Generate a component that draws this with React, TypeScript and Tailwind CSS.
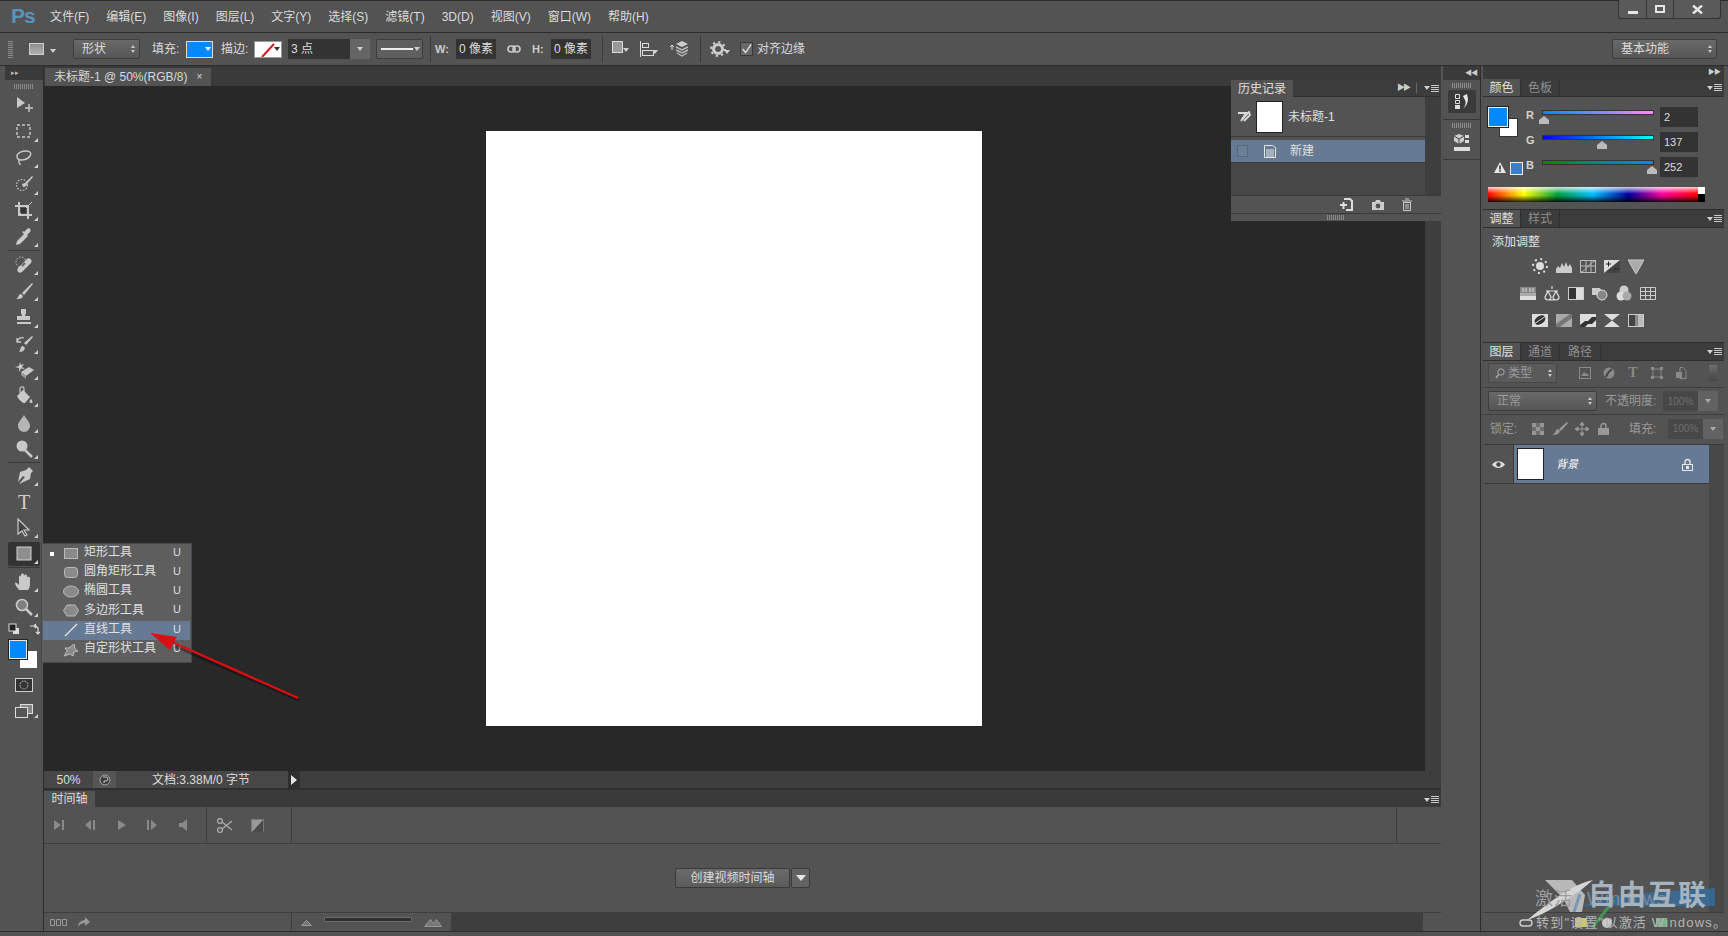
import React from "react";

const MENUS = ["文件(F)", "编辑(E)", "图像(I)", "图层(L)", "文字(Y)", "选择(S)", "滤镜(T)", "3D(D)", "视图(V)", "窗口(W)", "帮助(H)"];

function Svg({ w = 16, h = 16, className, children }: { w?: number; h?: number; className?: string; children: React.ReactNode }) {
  return (
    <svg width={w} height={h} viewBox={`0 0 ${w} ${h}`} className={className} fill="none">
      {children}
    </svg>
  );
}

const C = "#c9c9c9";

const toolIcons: Record<string, React.ReactNode> = {
  move: (<><path d="M3 2v11l8-5z" fill={C} /><path d="M15 9v8M11 13h8" stroke={C} strokeWidth="1.4" /></>),
  marquee: <rect x="3" y="3" width="13" height="12" stroke={C} strokeWidth="1.4" strokeDasharray="3 2" />,
  lasso: <path d="M3 8c0-3 5-5 9-5s6 2 4 5-6 4-9 4-4-2-4-4zM5 12c-1 2 1 3 1 5" stroke={C} strokeWidth="1.4" />,
  quick: (<><circle cx="8" cy="11" r="5.5" stroke={C} strokeWidth="1.2" strokeDasharray="1.5 1.5" /><path d="M18 2l-7 7-3 1 1 3c3 0 4-2 4-3l6-7z" fill={C} /></>),
  crop: (<><path d="M5 1v13h13M1 5h13v13" stroke={C} strokeWidth="2" /><path d="M5 14L18 1" stroke={C} /><rect x="7" y="7" width="5" height="5" fill="#333" /></>),
  eyedrop: <path d="M2 18l1-4 7-7 3 3-7 7zM10 5l3-3c2-2 5 1 3 3l-3 3 1 1-1 1-5-5 1-1z" fill={C} />,
  heal: (<><path d="M4 13L13 4c2-2 6 1 4 4l-9 9c-3 2-6-1-4-4z" fill={C} /><circle cx="7" cy="7" r="5" stroke={C} strokeDasharray="1.5 1.5" /><path d="M8 11l3-3" stroke="#666" strokeWidth="2" /></>),
  brush: <path d="M18 2L8 12l2 2L19 3zM2 18c3 0 6 0 7-3l-2-2c-3 0-2 4-5 5z" fill={C} />,
  stamp: <path d="M7 2h5v4l-1 3h5v4H3V9h5l-1-3zM3 15h14v2H3z" fill={C} />,
  history: (<><path d="M18 2L10 9l2 2 7-8zM5 18c3 0 5-1 6-4l-2-2c-3 0-2 4-4 6z" fill={C} /><path d="M3 8c1-4 4-5 7-4M3 4v4h4" stroke={C} strokeWidth="1.3" /></>),
  eraser: (<><path d="M7 12l8-5 5 3-8 6z" fill={C} /><path d="M7 12v3l5 4v-3z" fill="#999" /><path d="M6 2l1 3 3-1-2 3 3 2-4-.5L5 12 5 8 1 7l4-1z" fill={C} /></>),
  bucket: (<><path d="M3 10l6-6 7 7-5 6c-2 1-7-4-8-7z" fill={C} /><path d="M6 7V3c0-3 4-3 4 0v3" stroke={C} strokeWidth="1.2" /><path d="M17 13c2 2 2 4 0 4s-2-2 0-4z" fill={C} /></>),
  drop: <path d="M10 2c3 5 6 7 6 11a6 6 0 01-12 0c0-4 3-6 6-11z" fill="#b5b5b5" />,
  dodge: (<><circle cx="8" cy="7" r="5.5" fill={C} /><path d="M11 11l7 7" stroke={C} strokeWidth="2.5" /></>),
  pen: <path d="M15 1l4 4-2 2-1 6-11 5 6-7 .6.5L9 10 4 16l2-10 6-2zM4 18h0" fill={C} />,
  path: <path d="M4 1v15l4-3 3 5 2-1-3-5h5z" fill="#444" stroke={C} strokeWidth="1.2" />,
  rect: (<><rect x="3" y="3" width="14" height="13" fill="#8f8f8f" stroke="#d2d2d2" /></>),
  hand: <path d="M5 18c-2-3-4-5-4-7 1-1 2 0 4 2V5c0-2 2-2 2 0V3c0-2 3-2 3 0v1c0-2 3-2 3 0v2c0-2 3-1 3 0v6c0 3-1 5-2 6z" fill={C} />,
  zoom: (<><circle cx="8" cy="7" r="5.5" fill="#7f7f7f" stroke={C} strokeWidth="1.6" /><path d="M12 11l6 6" stroke={C} strokeWidth="2.5" /></>),
};

function Tool({ id, h = 26.4, corner = true }: { id: string; h?: number; corner?: boolean }) {
  return (
    <div className="relative flex items-center justify-center" style={{ height: h }}>
      <Svg w={20} h={20}>{toolIcons[id]}</Svg>
      {corner && <span className="absolute right-[5px] bottom-[3px] border-b-[4px] border-l-[4px] border-b-[#cfcfcf] border-l-transparent" />}
    </div>
  );
}

function Toolbox() {
  return (
    <div className="w-[39px] ml-[5px] mr-0 flex flex-col bg-[#535353] border-r border-[#2c2c2c]">
      <div className="h-[14px] bg-[#3a3a3a] flex items-center pl-[6px] text-[7px] text-[#bbb]">▸▸</div>
      <div className="h-[12px] flex items-center justify-center"><Grip w={20} /></div>
      <div className="flex flex-col">
        {["move", "marquee", "lasso", "quick", "crop", "eyedrop"].map((t, i) => <Tool key={t} id={t} corner={i > 0} />)}
      </div>
      <div className="mx-[3px] border-b border-[#3a3a3a]" />
      <div className="flex flex-col">
        {["heal", "brush", "stamp", "history", "eraser", "bucket", "drop", "dodge"].map((t) => <Tool key={t} id={t} />)}
      </div>
      <div className="mx-[3px] border-b border-[#3a3a3a]" />
      <Tool id="pen" h={26} />
      <div className="relative h-[26px] flex items-center justify-center font-['Liberation_Serif',serif] text-[20px] text-[#cfcfcf]">T</div>
      <Tool id="path" h={26} />
      <div className="h-[1px]" />
      <div className="relative mx-[3px] h-[24px] bg-[#333] rounded-[2px] flex items-center justify-center">
        <Svg w={20} h={20}>{toolIcons.rect}</Svg>
        <span className="absolute right-[2px] bottom-[2px] border-b-[4px] border-l-[4px] border-b-[#d8d8d8] border-l-transparent" />
      </div>
      <div className="mx-[3px] mt-[1px] border-b border-[#3a3a3a]" />
      <Tool id="hand" h={27} />
      <Tool id="zoom" h={25} />
      <div className="h-[14px] mt-[2px] flex items-center justify-between px-[3px]">
        <Svg w={12} h={12}><rect x="5" y="5" width="6" height="6" fill="#ddd" /><rect x="1" y="1" width="7" height="7" fill="#222" stroke="#ddd" /></Svg>
        <Svg w={11} h={12}><path d="M1 3h6l2 2v5M7 1l-2 2 2 2M7 9l2 2 2-2" stroke="#ddd" strokeWidth="1.2" /></Svg>
      </div>
      <div className="relative h-[30px] mt-[4px]">
        <div className="absolute left-[14px] top-[10px] w-[19px] h-[19px] bg-white border border-[#555]" />
        <div className="absolute left-[4px] top-0 w-[18px] h-[19px] bg-[#0289fc] border border-[#e8e8e8] outline outline-[#222]" />
      </div>
      <div className="h-[15px] mt-[8px]" />
      <div className="flex justify-center -mt-[15px]">
        <Svg w={18} h={14}><rect x=".5" y=".5" width="17" height="13" fill="#333" stroke="#d0d0d0" /><circle cx="9" cy="7" r="4" stroke="#ddd" strokeDasharray="1.5 1.2" /></Svg>
      </div>
      <div className="relative flex justify-center mt-[12px]">
        <Svg w={18} h={14}><rect x="5.5" y=".5" width="12" height="9" fill="#888" stroke="#ddd" /><rect x=".5" y="3.5" width="12" height="10" fill="#555" stroke="#ddd" /></Svg>
        <span className="absolute right-[5px] bottom-0 border-b-[4px] border-l-[4px] border-b-[#cfcfcf] border-l-transparent" />
      </div>
    </div>
  );
}

function Grip({ w = 20 }: { w?: number }) {
  return <div className="h-[5px] bg-[repeating-linear-gradient(90deg,#8a8a8a_0_1px,transparent_1px_2px)]" style={{ width: w }} />;
}

function Chevrons({ className = "" }: { className?: string }) {
  return (
    <span className={`flex flex-col gap-[2px] items-end ${className}`}>
      <span className="border-x-[2px] border-b-[3px] border-x-transparent border-b-[#c8c8c8]" />
      <span className="border-x-[2px] border-t-[3px] border-x-transparent border-t-[#c8c8c8]" />
    </span>
  );
}

function Caret({ color = "#d0d0d0" }: { color?: string }) {
  return <span className="inline-block border-x-[3px] border-t-[4px] border-x-transparent" style={{ borderTopColor: color }} />;
}

function PanelMenu() {
  return (
    <span className="flex items-center gap-[1px]">
      <Caret />
      <span className="flex flex-col gap-[1px] w-[8px]">
        <i className="block h-px bg-[#c8c8c8]" /><i className="block h-px bg-[#c8c8c8]" /><i className="block h-px bg-[#c8c8c8]" /><i className="block h-px bg-[#c8c8c8]" />
      </span>
    </span>
  );
}

function Select({ label, className = "" }: { label: string; className?: string }) {
  return (
    <div className={`flex items-center justify-between rounded-[2px] border border-[#3d3d3d] bg-gradient-to-b from-[#696969] to-[#565656] pl-[8px] pr-[4px] h-[20px] ${className}`}>
      <span>{label}</span>
      <Chevrons />
    </div>
  );
}

function Field({ children, className = "" }: { children: React.ReactNode; className?: string }) {
  return <div className={`h-[20px] bg-[#333] flex items-center justify-center text-[#ddd] ${className}`}>{children}</div>;
}

function Sep() {
  return <div className="w-px h-[26px] bg-[#3a3a3a]" />;
}

function TitleBar() {
  return (
    <div className="h-[33px] flex border-t border-[#2c2c2c] border-b border-b-[#2c2c2c] relative">
      <div className="w-[50px] pl-[11px] pt-[3px] text-[21px] leading-[24px] font-bold text-[#5a93ba] font-['Liberation_Sans',sans-serif] tracking-[-1px]">Ps</div>
      <div className="flex gap-[17px] items-center pt-[1px] text-[12px] text-[#dcdcdc]">
        {MENUS.map((m) => <span key={m} className="whitespace-nowrap">{m}</span>)}
      </div>
      <div className="ml-auto mr-[7px] flex h-[19px] w-[103px] -mt-px rounded-b-[3px] border border-t-0 border-[#333] bg-[#5a5a5a]">
        <div className="w-[28px] flex items-end justify-center pb-[4px] border-r border-[#3a3a3a]"><i className="block w-[10px] h-[3px] bg-[#e6e6e6]" /></div>
        <div className="w-[27px] flex items-center justify-center border-r border-[#3a3a3a]"><i className="block w-[10px] h-[8px] border-2 border-[#e6e6e6]" /></div>
        <div className="flex-1 flex items-center justify-center text-[#e6e6e6]">
          <Svg w={11} h={9}><path d="M1 .5l9 8M10 .5l-9 8" stroke="#e6e6e6" strokeWidth="2.4" /></Svg>
        </div>
      </div>
    </div>
  );
}

function OptionsBar() {
  return (
    <div className="h-[33px] flex items-center border-b border-[#2c2c2c] text-[12px] text-[#dcdcdc] relative">
      <div className="ml-[8px] w-[5px] h-[18px] bg-[repeating-linear-gradient(0deg,#8a8a8a_0_1px,transparent_1px_2px)]" />
      <div className="ml-[16px] w-[15px] h-[12px] bg-gradient-to-b from-[#8e8e8e] to-[#b0b0b0] border border-[#d0d0d0]" />
      <span className="ml-[6px]"><Caret /></span>
      <Select label="形状" className="ml-[17px] w-[67px]" />
      <span className="ml-[12px] w-[34px]">填充:</span>
      <div className="relative w-[27px] h-[17px] bg-[#0289fc] border border-[#dcdcdc]">
        <span className="absolute right-[1px] bottom-[1px]"><Caret color="#fff" /></span>
      </div>
      <span className="ml-[8px] w-[33px]">描边:</span>
      <div className="relative w-[28px] h-[17px] bg-white border border-[#999] overflow-hidden">
        <svg width="28" height="17" className="absolute inset-0"><path d="M7 15L19 2" stroke="#d01820" strokeWidth="2" /></svg>
        <span className="absolute right-[1px] bottom-[1px]"><Caret color="#333" /></span>
      </div>
      <div className="ml-[6px] flex">
        <Field className="w-[62px] !justify-start pl-[3px]">3 点</Field>
        <div className="w-[20px] h-[20px] flex items-center justify-center bg-[#656565]"><Caret /></div>
      </div>
      <div className="ml-[6px] w-[47px] h-[20px] rounded-[2px] border border-[#3d3d3d] bg-[#5f5f5f] flex items-center gap-[1px] pl-[4px]">
        <i className="block w-[32px] h-[2px] bg-[#eee]" /><Caret />
      </div>
      <div className="ml-[7px]"><Sep /></div>
      <span className="ml-[4px] w-[21px] font-bold text-[11px] text-[#ccc]">W:</span>
      <Field className="w-[40px]">0 像素</Field>
      <span className="ml-[11px]">
        <Svg w={14} h={10}><rect x="1" y="2" width="7" height="6" rx="3" stroke="#ccc" strokeWidth="1.6" /><rect x="6" y="2" width="7" height="6" rx="3" stroke="#ccc" strokeWidth="1.6" /></Svg>
      </span>
      <span className="ml-[11px] w-[19px] font-bold text-[11px] text-[#ccc]">H:</span>
      <Field className="w-[40px]">0 像素</Field>
      <div className="ml-[11px]"><Sep /></div>
      <span className="relative ml-[9px] w-[14px] h-[16px]">
        <Svg w={12} h={15}><rect x=".5" y=".5" width="10" height="11" fill="#999" stroke="#ddd" /></Svg>
        <span className="absolute right-[-3px] bottom-0"><Caret /></span>
      </span>
      <span className="relative ml-[14px] w-[14px] h-[16px]">
        <Svg w={14} h={16}><path d="M.5 0v16" stroke="#ddd" /><rect x="2.5" y="2.5" width="6" height="4" stroke="#ddd" /><rect x="2.5" y="9.5" width="11" height="5" stroke="#ddd" /></Svg>
        <span className="absolute right-[-4px] bottom-[-2px]"><Caret /></span>
      </span>
      <span className="ml-[16px] w-[20px] h-[18px]">
        <Svg w={20} h={18}><path d="M12 1l6 3-6 3-6-3z" fill="#ccc" /><path d="M6 7l6 3 6-3M6 10l6 3 6-3M7 13l5 3 5-3" stroke="#bbb" strokeWidth="1.4" /><path d="M2 10V5M0 7l2-2 2 2" stroke="#ddd" /></Svg>
      </span>
      <div className="ml-[10px]"><Sep /></div>
      <span className="relative ml-[9px] w-[16px] h-[16px]">
        <Svg w={16} h={16}><circle cx="8" cy="8" r="4.5" stroke="#ccc" strokeWidth="3" /><circle cx="8" cy="8" r="7" stroke="#ccc" strokeWidth="2" strokeDasharray="2.2 3.3" /></Svg>
        <span className="absolute right-[-4px] bottom-[-2px]"><Caret /></span>
      </span>
      <div className="ml-[14px] w-[13px] h-[14px] border border-[#3a3a3a] bg-[#686868] flex items-center justify-center">
        <Svg w={12} h={12}><path d="M2 6l3 4 6-9" stroke="#e0e0e0" strokeWidth="1.5" /></Svg>
      </div>
      <span className="ml-[4px] whitespace-nowrap">对齐边缘</span>
      <Select label="基本功能" className="absolute right-[11px] top-[6px] w-[105px] !pl-[8px]" />
    </div>
  );
}

const SHAPES = [
  { name: "矩形工具", icon: <rect x="1.5" y="1.5" width="13" height="10" fill="#8a8a8a" stroke="#bbb" />, on: true },
  { name: "圆角矩形工具", icon: <rect x="1.5" y="1.5" width="13" height="10" rx="3" fill="#8a8a8a" stroke="#bbb" /> },
  { name: "椭圆工具", icon: <ellipse cx="8" cy="6.5" rx="7.5" ry="5.5" fill="#8a8a8a" stroke="#bbb" /> },
  { name: "多边形工具", icon: <path d="M4 1h8l3.5 5.5L12 12H4L.5 6.5z" fill="#8a8a8a" stroke="#bbb" /> },
  { name: "直线工具", icon: <path d="M2 13L14 1" stroke="#e6e6e6" strokeWidth="1.2" />, active: true },
  { name: "自定形状工具", icon: <path d="M1 13l3-5-2-3 4 0 5-4 1 5 3 2-4 1-1 4-3-2z" fill="#8a8a8a" stroke="#bbb" /> },
];

function ShapeFlyout() {
  return (
    <div className="absolute left-[41px] top-[543px] w-[151px] h-[120px] bg-[#5e5e5e] border border-[#484848] px-[1px] text-[12px] text-[#e0e0e0]">
      {SHAPES.map((s) => (
        <div key={s.name} className={`flex items-center h-[19.2px] pl-[7px] ${s.active ? "bg-[#667a94]" : ""}`}>
          <i className={`block w-[4px] h-[4px] ${s.on ? "bg-white" : ""}`} />
          <span className="ml-[9px] w-[16px] flex"><Svg w={16} h={14}>{s.icon}</Svg></span>
          <span className="ml-[5px] w-[85px] pb-[3px] whitespace-nowrap">{s.name}</span>
          <span className="ml-[4px] pb-[3px] text-[11px] text-[#ddd]">U</span>
        </div>
      ))}
    </div>
  );
}

function RedArrow() {
  return (
    <svg className="absolute left-[140px] top-[620px] pointer-events-none" width="170" height="90" viewBox="0 0 170 90" fill="none">
      <path d="M158 78L34 24" stroke="#00000055" strokeWidth="3" transform="translate(1 2)" />
      <path d="M158 78L32 22" stroke="#d90f14" strokeWidth="2.4" />
      <path d="M10 13L37 17 33 23 30 30z" fill="#d90f14" />
    </svg>
  );
}

function HistoryPanel() {
  return (
    <div className="absolute right-0 top-[14px] w-[210px] h-[141px] bg-[#535353] flex flex-col text-[12px] text-[#e0e0e0]">
      <div className="h-[17px] bg-[#3c3c3c] flex border-b border-[#2f2f2f]">
        <div className="w-[62px] h-[17px] bg-[#535353] flex items-center pl-[7px]">历史记录</div>
        <div className="ml-auto flex items-center gap-[7px] pr-[2px]">
          <span className="text-[8px] tracking-[-2px] text-[#ccc]">▶▶</span>
          <i className="block w-px h-[10px] bg-[#666]" />
          <PanelMenu />
        </div>
      </div>
      <div className="flex flex-1">
        <div className="flex-1 flex flex-col">
          <div className="h-[40px] flex items-center border-b border-[#3a3a3a]">
            <span className="ml-[6px] w-[14px]"><Svg w={14} h={12}><path d="M1 2h8l-5 8 8-9 1 3-6 6" stroke="#d8d8d8" strokeWidth="1.8" /></Svg></span>
            <div className="ml-[5px] w-[27px] h-[32px] bg-white border border-[#222]" />
            <span className="ml-[5px]">未标题-1</span>
          </div>
          <div className="h-[3px]" />
          <div className="h-[23px] bg-[#667a94] flex items-center border-b border-[#3a3a3a]">
            <div className="ml-[6px] w-[11px] h-[12px] border border-[#56677e] bg-[#6c7f99]" />
            <span className="ml-[15px]"><Svg w={14} h={15}><path d="M1.5 1.5h8l3 2v10h-11z" stroke="#e6e6e6" /><path d="M3 6h8M3 8h8M3 10h8M3 12h8" stroke="#e6e6e6" /></Svg></span>
            <span className="ml-[13px]">新建</span>
          </div>
          <div className="flex-1 bg-[#474747]" />
        </div>
        <div className="w-[16px] bg-[#3e3e3e]" />
      </div>
      <div className="h-[19px] flex items-center justify-end gap-[16px] pr-[28px] border-y border-[#3a3a3a]">
        <span className="mr-[2px]"><Svg w={14} h={13}><path d="M5 1h6l2 2v9H7M1 7h7M4.5 4v7" stroke="#ddd" strokeWidth="2" /></Svg></span>
        <Svg w={14} h={12}><path d="M1 3h3l1-2h4l1 2h3v8H1z" fill="#ccc" /><circle cx="7" cy="7" r="2.4" fill="#535353" /></Svg>
        <Svg w={12} h={13}><path d="M1 3h10M4 1h4M2.5 4.5h7v8h-7zM5 6v5M7 6v5" stroke="#ccc" /></Svg>
      </div>
      <div className="h-[7px] flex items-center justify-center"><Grip w={18} /></div>
    </div>
  );
}

function DocumentArea() {
  return (
    <div className="flex-1 flex flex-col min-h-0">
      <div className="h-[20px] bg-[#3a3a3a] pt-[2px] pl-px">
        <div className="w-[166px] h-[18px] bg-[#535353] flex items-center pl-[9px] text-[12px] text-[#d8d8d8] whitespace-nowrap">
          未标题-1 @ 50%(RGB/8)
          <span className="ml-[9px] text-[10px] leading-none">×</span>
        </div>
      </div>
      <div className="flex-1 flex min-h-0">
        <div className="flex-1 bg-[#282828] flex items-center justify-center pb-[1px] pr-[1px]">
          <div className="w-[496px] h-[595px] bg-white" />
        </div>
        <div className="w-[16px] bg-[#3e3e3e]" />
      </div>
      <div className="h-[18px] bg-[#3e3e3e] flex items-center text-[12px] text-[#dcdcdc] border-b border-[#2f2f2f]">
        <div className="w-[49px] h-full bg-[#474747] flex items-center justify-center">50%</div>
        <div className="w-[23px] h-full bg-[#555] flex items-center justify-center">
          <Svg w={12} h={12}><circle cx="6" cy="6" r="5" fill="#3a3a3a" stroke="#aaa" /><path d="M4 3h3a2 2 0 010 4H5v2" stroke="#ccc" /></Svg>
        </div>
        <div className="w-[172px] h-full bg-[#474747] flex items-center pl-[36px] whitespace-nowrap">文档:3.38M/0 字节</div>
        <div className="w-[12px] h-full bg-[#2f2f2f] flex items-center justify-center">
          <span className="border-y-[5px] border-l-[6px] border-y-transparent border-l-[#e6e6e6]" />
        </div>
      </div>
    </div>
  );
}

function Timeline() {
  const grey = "#8a8a8a";
  const transport = [
    <Svg w={13} h={12}><path d="M1 1l7 5-7 5zM9 1h2v10H9z" fill={grey} /></Svg>,
    <Svg w={13} h={12}><path d="M7 1L1 6l6 5zM9 1h2v10H9z" fill={grey} /></Svg>,
    <Svg w={10} h={12}><path d="M1 1l8 5-8 5z" fill={grey} /></Svg>,
    <Svg w={13} h={12}><path d="M1 1h2v10H1zM5 1l6 5-6 5z" fill={grey} /></Svg>,
    <Svg w={9} h={12}><path d="M0 4h3l5-4v12L3 8H0z" fill={grey} /></Svg>,
  ];
  return (
    <div className="h-[142px] flex flex-col text-[12px] text-[#dcdcdc]">
      <div className="h-[18px] bg-[#3a3a3a] flex items-end border-t border-[#2f2f2f]">
        <div className="w-[51px] h-[16px] bg-[#535353] flex items-center justify-center">时间轴</div>
        <span className="ml-auto mr-[2px] mb-[4px]"><PanelMenu /></span>
      </div>
      <div className="h-[37px] flex border-b border-[#3e3e3e]">
        <div className="w-[163px] flex items-center border-r border-[#3e3e3e]">
          {transport.map((t, i) => <span key={i} className="w-[31px] flex justify-center">{t}</span>)}
        </div>
        <div className="w-[85px] flex items-center gap-[18px] pl-[9px] border-r border-[#3e3e3e]">
          <Svg w={17} h={15}><circle cx="4" cy="12" r="2.4" stroke="#a8a8a8" strokeWidth="1.4" /><circle cx="4" cy="3" r="2.4" stroke="#a8a8a8" strokeWidth="1.4" /><path d="M6 4l10 8M6 11l10-8" stroke="#a8a8a8" strokeWidth="1.4" /></Svg>
          <Svg w={13} h={13}><rect x=".5" y=".5" width="12" height="12" fill="#999" stroke="#777" /><path d="M1 13L12 1v12z" fill="#4a4a4a" /></Svg>
        </div>
        <div className="ml-auto w-[45px] border-l border-[#3e3e3e]" />
      </div>
      <div className="flex-1 flex items-center justify-center gap-px pb-[1px]">
        <div className="w-[115px] h-[20px] rounded-[2px] border border-[#3a3a3a] bg-gradient-to-b from-[#6a6a6a] to-[#5b5b5b] flex items-center justify-center">创建视频时间轴</div>
        <div className="w-[19px] h-[20px] rounded-[2px] border border-[#3a3a3a] bg-[#636363] flex items-center justify-center">
          <span className="border-x-[5px] border-t-[6px] border-x-transparent border-t-[#e6e6e6]" />
        </div>
      </div>
      <div className="h-[19px] flex border-t border-[#3e3e3e]">
        <div className="w-[248px] flex items-center pl-[6px] gap-[9px] border-r border-[#3e3e3e]">
          <Svg w={18} h={7}><path d="M.5.5h4v6h-4zM6.5.5h4v6h-4zM12.5.5h4v6h-4z" stroke="#999" /></Svg>
          <Svg w={14} h={12}><path d="M8 1l5 5-5 4V7C5 7 3 8 1 11c0-4 3-7 7-7z" fill="#999" /></Svg>
        </div>
        <div className="w-[159px] flex items-center pl-[9px] gap-[12px] relative">
          <Svg w={11} h={7}><path d="M.5 6.5l5-5 5 5z" stroke="#999" fill="#777" /></Svg>
          <div className="w-[88px] h-[5px] -mt-[5px] bg-[#2f2f2f] border border-[#6a6a6a]" />
          <Svg w={18} h={9}><path d="M.5 8.5l6-7 3 4 3-4 5 7z" stroke="#999" fill="#777" /></Svg>
        </div>
        <div className="flex-1 bg-[#3e3e3e]" />
        <div className="w-[18px]" />
      </div>
    </div>
  );
}

function MidDock() {
  return (
    <div className="w-[38px] ml-[2px] flex flex-col border-r border-[#2c2c2c]">
      <div className="h-[14px] bg-[#3a3a3a] flex items-center justify-end pr-[3px] text-[7px] text-[#ccc] tracking-[-1px]">◀◀</div>
      <div className="h-[10px] flex items-center justify-center"><Grip w={20} /></div>
      <div className="h-[30px] flex items-start justify-center border-b border-[#3a3a3a]">
        <div className="w-[28px] h-[23px] bg-[#3a3a3a] rounded-[2px] flex items-center justify-center">
          <Svg w={16} h={17}><path d="M1.5 1.5h4v4h-4zM1.5 7.5h4v3h-4z" stroke="#ddd" /><rect x="1" y="12" width="5" height="4" fill="#ddd" /><path d="M9 3l4-2 1 5c0 4-2 7-5 10 3-4 3-7 2-9z" fill="#e8e8e8" /></Svg>
        </div>
      </div>
      <div className="h-[10px] flex items-center justify-center"><Grip w={20} /></div>
      <div className="h-[30px] flex justify-center pt-[4px] border-b border-[#3a3a3a]">
        <Svg w={16} h={18}><path d="M5 0l5 2v5l-5 3-5-3V2z" fill="#ccc" /><path d="M0 2l5 3 5-3M5 5v5" stroke="#444" /><rect x="11" y="1" width="4" height="3" fill="#ddd" /><rect x="11" y="6" width="4" height="3" fill="#ddd" /><rect x="0" y="13" width="16" height="4" fill="#ddd" /></Svg>
      </div>
    </div>
  );
}

function Tabs({ tabs }: { tabs: { name: string; w: number }[] }) {
  return (
    <div className="h-[18px] bg-[#3c3c3c] flex border-b border-[#2f2f2f] text-[12px]">
      {tabs.map((t, i) => (
        <div key={t.name} style={{ width: t.w }} className={`flex items-center justify-center border-r border-[#2f2f2f] ${i === 0 ? "bg-[#535353] text-[#e0e0e0]" : "text-[#8f8f8f]"}`}>{t.name}</div>
      ))}
      <span className="ml-auto mr-[2px] self-center"><PanelMenu /></span>
    </div>
  );
}

function Slider({ label, value, max, track }: { label: string; value: number; max: number; track: string }) {
  return (
    <div className="h-[25px] shrink-0 flex items-start">
      <span className="w-[16px] -mt-[3px] text-[11px] font-bold text-[#d4d4d4]">{label}</span>
      <div className="relative w-[112px] h-[5px] border border-[#333]">
        <div className={`h-full ${track}`} />
        <svg className="absolute top-[5px] -translate-x-1/2" style={{ left: `${(value / max) * 100}%` }} width="10" height="8"><path d="M5 0l5 4v4H0V4z" fill="#bbb" /></svg>
      </div>
      <Field className="ml-[6px] -mt-[3px] w-[38px] !justify-start pl-[4px] text-[11px]">{value}</Field>
    </div>
  );
}

function ColorPanel() {
  return (
    <div className="h-[131px] flex flex-col border-b border-[#2c2c2c]">
      <Tabs tabs={[{ name: "颜色", w: 38 }, { name: "色板", w: 39 }]} />
      <div className="flex-1 pl-[5px] pt-[10px]">
        <div className="flex h-[77px]">
          <div className="relative w-[38px]">
            <div className="absolute left-[11px] top-[11px] w-[19px] h-[19px] bg-white border border-[#333]" />
            <div className="absolute left-0 top-0 w-[20px] h-[20px] bg-[#0289fc] border border-[#eee] outline outline-[#222]" />
            <svg className="absolute left-[6px] top-[55px]" width="12" height="11" viewBox="0 0 12 11"><path d="M6 0l6 11H0z" fill="#e6e6e6" /><path d="M5.2 3.5h1.6v4H5.2zM5.2 8.3h1.6v1.5H5.2z" fill="#333" /></svg>
            <div className="absolute left-[22px] top-[55px] w-[13px] h-[13px] bg-[#3c7fc4] border border-[#eee]" />
          </div>
          <div className="flex flex-col pt-[3px]">
            <Slider label="R" value={2} max={255} track="bg-[linear-gradient(90deg,#0289fc,#ff89fc)]" />
            <Slider label="G" value={137} max={255} track="bg-[linear-gradient(90deg,#0200fc,#02fffc)]" />
            <Slider label="B" value={252} max={255} track="bg-[linear-gradient(90deg,#028900,#0289ff)]" />
          </div>
        </div>
        <div className="mt-[3px] flex h-[15px] w-[217px]">
          <div className="flex-1 bg-[linear-gradient(180deg,#ffffffcc_0%,#ffffff00_45%,#00000000_55%,#000000dd_100%),linear-gradient(90deg,#ff0000,#ffff00_17%,#00a040_33%,#00c0ff_50%,#0000a0_67%,#ff00a0_83%,#ff0000)]" />
          <div className="w-[7px] flex flex-col"><i className="block h-[7px] bg-white" /><i className="block h-[8px] bg-black" /></div>
        </div>
      </div>
    </div>
  );
}

const ADJ_ROWS: React.ReactNode[][] = [
  [
    <><circle cx="8" cy="8" r="4" fill="#ddd" /><circle cx="8" cy="8" r="7" stroke="#ddd" strokeWidth="2" strokeDasharray="2 3.5" /></>,
    <path d="M0 15V11l2-3 2 2 2-5 2 4 2-5 2 5 2-3 2 4v5z" fill="#ccc" />,
    <><rect x=".5" y="2.5" width="15" height="12" stroke="#bbb" /><path d="M1 14C6 13 8 6 15 3M6 3v11M11 3v11M1 8h14" stroke="#bbb" /></>,
    <><rect y="2" width="16" height="13" fill="#ddd" /><path d="M0 15L16 2v13z" fill="#444" /><path d="M2 6h5M4.5 3.5v5M10 11h5" stroke="#222" /></>,
    <path d="M0 2h16L8 16z" fill="#aaa" stroke="#ccc" />,
  ],
  [
    <><rect y="2" width="16" height="13" fill="#aaa" /><rect y="2" width="16" height="6" fill="#888" /><path d="M3 3v4M6 3v4M10 3v4M13 3v4" stroke="#ddd" /><rect y="11" width="16" height="4" fill="#ddd" /></>,
    <path d="M8 1v3M2 6h12M4 6l-3 6a3 3 0 006 0zM12 6l-3 6a3 3 0 006 0zM5 15h6" stroke="#ddd" strokeWidth="1.2" />,
    <><rect x=".5" y="2.5" width="15" height="12" fill="#ddd" stroke="#ccc" /><rect x="1" y="3" width="7" height="11" fill="#333" /></>,
    <><path d="M0 3h8l1 2h2v5H0z" fill="#ccc" /><circle cx="10" cy="10" r="5" fill="#888" stroke="#ddd" /></>,
    <><circle cx="8" cy="5" r="4.5" fill="#ccc" /><circle cx="5" cy="11" r="4.5" fill="#ddd" /><circle cx="11" cy="11" r="4.5" fill="#aaa" /></>,
    <path d="M.5 2.5h15v12H.5zM5.5 3v11M10.5 3v11M1 6.5h14M1 10.5h14" stroke="#ccc" />,
  ],
  [
    <><rect y="2" width="16" height="13" fill="#ddd" /><ellipse cx="8" cy="8" rx="6" ry="4" transform="rotate(-35 8 8)" fill="#333" /><path d="M2 12L14 4" stroke="#ddd" /></>,
    <><rect y="2" width="16" height="13" fill="#aaa" /><path d="M0 12L14 2h2v4L4 15H0z" fill="#777" /></>,
    <><rect y="2" width="16" height="13" fill="#ddd" /><path d="M0 13l5-4h3l4-4h4v3l-4 4H8l-3 3H0z" fill="#333" /></>,
    <><rect y="2" width="16" height="13" fill="#ddd" /><path d="M0 2l8 6.5L0 15zM16 2L8 8.5l8 6.5z" fill="#555" /></>,
    <><rect x=".5" y="2.5" width="15" height="12" fill="#888" stroke="#ccc" /><rect x="1" y="3" width="6" height="11" fill="#444" /><rect x="10" y="3" width="5" height="11" fill="#bbb" /></>,
  ],
];

function AdjustPanel() {
  return (
    <div className="h-[133px] flex flex-col border-b border-[#2c2c2c] text-[12px] text-[#e0e0e0]">
      <Tabs tabs={[{ name: "调整", w: 38 }, { name: "样式", w: 39 }]} />
      <div className="pl-[9px] pt-[5px] h-[23px]">添加调整</div>
      <div className="flex flex-col items-center pr-[32px] pt-[7px] gap-[10px]">
        {ADJ_ROWS.map((row, i) => (
          <div key={i} className="flex gap-[8px] h-[17px]">
            {row.map((ic, j) => <Svg key={j} w={16} h={17}>{ic}</Svg>)}
          </div>
        ))}
      </div>
    </div>
  );
}

function LayersPanel() {
  const dim = "text-[#9a9a9a]";
  return (
    <div className="flex-1 flex flex-col text-[12px] relative">
      <Tabs tabs={[{ name: "图层", w: 38 }, { name: "通道", w: 39 }, { name: "路径", w: 41 }]} />
      <div className={`h-[27px] flex items-center pl-[5px] pb-[2px] border-b border-[#3e3e3e] ${dim}`}>
        <div className="w-[69px] h-[20px] border border-[#484848] bg-[#5a5a5a] rounded-[2px] flex items-center pl-[6px] pr-[4px] justify-between">
          <span className="flex items-center gap-[3px]">
            <Svg w={10} h={11}><circle cx="6" cy="4" r="3.2" stroke="#aaa" /><path d="M3.5 6.5L1 10" stroke="#aaa" strokeWidth="1.4" /></Svg>
            类型
          </span>
          <Chevrons />
        </div>
        <div className="ml-[22px] flex gap-[12px] items-center">
          <Svg w={12} h={12}><rect x=".5" y=".5" width="11" height="11" stroke="#8a8a8a" /><path d="M2 9l3-4 2 2 1-1 2 3z" fill="#8a8a8a" /></Svg>
          <Svg w={12} h={12}><circle cx="6" cy="6" r="5.5" fill="#8a8a8a" /><path d="M9 2C6 4 4 7 3 10" stroke="#444" strokeWidth="2" /></Svg>
          <span className="w-[12px] text-center font-['Liberation_Serif',serif] text-[14px] leading-[12px] font-bold text-[#8a8a8a]">T</span>
          <Svg w={12} h={12}><rect x="2" y="2" width="8" height="8" stroke="#8a8a8a" /><path d="M0 0h3v3H0zM9 0h3v3H9zM0 9h3v3H0zM9 9h3v3H9z" fill="#8a8a8a" /></Svg>
          <Svg w={12} h={12}><path d="M5 .5h3l3 3v8H5z" stroke="#8a8a8a" /><rect x="1" y="5" width="6" height="6" fill="#8a8a8a" /></Svg>
        </div>
        <div className="ml-[22px] w-[8px] h-[16px] bg-gradient-to-b from-[#6e6e6e] to-[#444]" />
      </div>
      <div className={`h-[27px] flex items-center pl-[5px] border-b border-[#3e3e3e] ${dim}`}>
        <Select label="正常" className="w-[109px]" />
        <span className="ml-[8px] w-[58px] whitespace-nowrap">不透明度:</span>
        <div className="w-[35px] h-[20px] bg-[#484848] text-[10px] text-[#6e6e6e] flex items-center justify-center">100%</div>
        <div className="w-[20px] h-[20px] bg-[#626262] flex items-center justify-center"><Caret color="#aaa" /></div>
      </div>
      <div className={`h-[30px] flex items-center pl-[7px] pb-[2px] border-b border-[#3a3a3a] ${dim}`}>
        <span className="w-[34px]">锁定:</span>
        <span className="ml-[8px]"><Svg w={12} h={12}><rect width="12" height="12" fill="#6e6e6e" /><path d="M0 0h4v4H0zM8 0h4v4H8zM4 4h4v4H4zM0 8h4v4H0zM8 8h4v4H8z" fill="#969696" /></Svg></span>
        <span className="ml-[8px]"><Svg w={16} h={13}><path d="M15 0L7 7l2 2 7-8zM0 13c4 0 7-1 8-4L6 7c-3 0-2 5-6 6z" fill="#999" /></Svg></span>
        <span className="ml-[7px]"><Svg w={14} h={14}><path d="M7 0l2 3H5zM7 14l2-3H5zM0 7l3-2v4zM14 7l-3-2v4zM7 3v8M3 7h8" stroke="#999" fill="#999" /></Svg></span>
        <span className="ml-[9px]"><Svg w={11} h={13}><path d="M3 6V4a2.5 2.5 0 015 0v2" stroke="#999" strokeWidth="1.4" /><rect y="6" width="11" height="7" fill="#999" /></Svg></span>
        <span className="ml-[20px] w-[37px] whitespace-nowrap">填充:</span>
        <div className="ml-[2px] w-[35px] h-[20px] bg-[#484848] text-[10px] text-[#6e6e6e] flex items-center justify-center">100%</div>
        <div className="w-[20px] h-[20px] bg-[#626262] flex items-center justify-center"><Caret color="#aaa" /></div>
      </div>
      <div className="flex-1 flex">
        <div className="flex-1 flex flex-col">
          <div className="h-[39px] flex border-b border-[#3a3a3a]">
            <div className="w-[31px] flex items-center justify-center border-r border-[#3a3a3a]">
              <Svg w={13} h={9}><path d="M0 4.5C3 0 10 0 13 4.5 10 9 3 9 0 4.5z" fill="#ddd" /><circle cx="6.5" cy="4.5" r="2.2" fill="#444" /></Svg>
            </div>
            <div className="flex-1 bg-[#667a94] flex items-center text-white">
              <div className="ml-[3px] w-[27px] h-[32px] bg-white border border-[#222]" />
              <span className="ml-[12px] italic text-[11px]">背景</span>
              <span className="ml-auto mr-[16px]"><Svg w={11} h={13}><path d="M3 6V4a2.5 2.5 0 015 0v2" stroke="#e8e8e8" strokeWidth="1.3" /><rect x=".5" y="6.5" width="10" height="6" stroke="#e8e8e8" /><rect x="4" y="8" width="3" height="3" fill="#e8e8e8" /></Svg></span>
            </div>
          </div>
        </div>
        <div className="w-[15px] bg-[#484848]" />
      </div>
      <div className="h-[19px] border-t border-[#3e3e3e]" />
    </div>
  );
}

function Watermark() {
  return (
    <div className="absolute left-[1510px] top-[870px] w-[218px] h-[66px] pointer-events-none">
      <svg className="absolute inset-0" width="218" height="66" viewBox="0 0 218 66" fill="none">
        <path d="M66 40C90 22 160 22 205 18v18H70z" fill="#2f74b0" opacity=".65" />
        <path d="M104 30L82 58" stroke="#3aa655" strokeWidth="3" opacity=".8" />
        <path d="M35 10h27l13 15-3 17H60l-7-14z" fill="#c4c4c4" opacity=".9" />
        <path d="M83 10C62 14 40 32 17 50c20-6 42-22 54-30z" fill="#d6d6d6" />
        <path d="M64 42l6-18" stroke="#3a78b0" strokeWidth="3" opacity=".5" />
        <rect x="65" y="48" width="12" height="9" fill="#d8d27a" opacity=".9" />
        <circle cx="97" cy="53" r="5" fill="#d6d6d6" opacity=".9" />
        <rect x="146" y="48" width="11" height="9" fill="#7fb98d" opacity=".9" />
        <rect x="10" y="50" width="12" height="6" rx="3" stroke="#cfcfcf" strokeWidth="1.4" />
      </svg>
      <div className="absolute left-[25px] top-[18px] text-[18px] leading-[22px] tracking-[1px] text-[#9c9c9c] whitespace-nowrap">激活 <span className="ml-[8px] text-[#7d8b98]">Windows</span></div>
      <div className="absolute left-[26px] top-[45px] text-[13px] leading-[16px] tracking-[1.2px] text-[#b4b4b4] whitespace-nowrap">转到"设置"以激活 Windows。</div>
      <div className="absolute left-[78px] top-[11px] text-[28px] leading-[30px] font-bold tracking-[2px] text-[#a6b4c0] whitespace-nowrap">自由互联</div>
    </div>
  );
}

export default function App() {
  return (
    <div className="relative w-[1728px] h-[936px] overflow-hidden bg-[#535353] font-['Liberation_Sans','Noto_Sans_CJK_SC',sans-serif]">
      <TitleBar />
      <OptionsBar />
      <div className="h-[866px] flex border-b border-[#2c2c2c]">
        <Toolbox />
        <div className="w-[1397px] flex flex-col relative">
          <DocumentArea />
          <Timeline />
          <HistoryPanel />
        </div>
        <MidDock />
        <div className="w-[241px] ml-[2px] flex flex-col text-[#dcdcdc]">
          <div className="h-[13px] bg-[#3a3a3a] flex items-center justify-end pr-[4px] text-[7px] text-[#ccc] tracking-[-1px]">▶▶</div>
          <ColorPanel />
          <AdjustPanel />
          <LayersPanel />
        </div>
      </div>
      <ShapeFlyout />
      <RedArrow />
      <Watermark />
    </div>
  );
}
